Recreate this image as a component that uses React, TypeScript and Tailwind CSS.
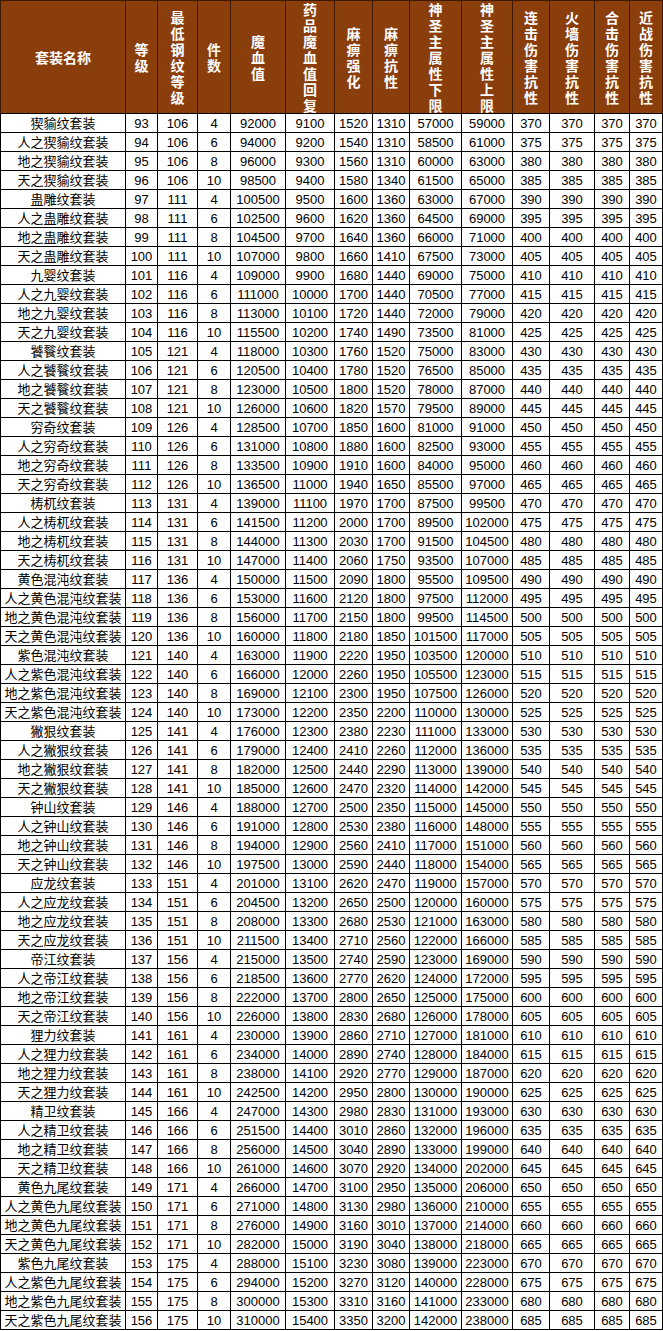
const columns = [
  "套装名称",
  "等级",
  "最低钢纹等级",
  "件数",
  "魔血值",
  "药品魔血值回复",
  "麻痹强化",
  "麻痹抗性",
  "神圣主属性下限",
  "神圣主属性上限",
  "连击伤害抗性",
  "火墙伤害抗性",
  "合击伤害抗性",
  "近战伤害抗性",
]

const groups = [
  { name: "猰貐", min: 106 },
  { name: "蛊雕", min: 111 },
  { name: "九婴", min: 116 },
  { name: "饕餮", min: 121 },
  { name: "穷奇", min: 126 },
  { name: "梼杌", min: 131 },
  { name: "黄色混沌", min: 136 },
  { name: "紫色混沌", min: 140 },
  { name: "獙狠", min: 141 },
  { name: "钟山", min: 146 },
  { name: "应龙", min: 151 },
  { name: "帝江", min: 156 },
  { name: "狸力", min: 161 },
  { name: "精卫", min: 166 },
  { name: "黄色九尾", min: 171 },
  { name: "紫色九尾", min: 175 },
]

// 魔血值, 药品回复, 麻痹强化, 麻痹抗性, 下限, 上限
const stats: number[][] = [
  [92000, 9100, 1520, 1310, 57000, 59000],
  [94000, 9200, 1540, 1310, 58500, 61000],
  [96000, 9300, 1560, 1310, 60000, 63000],
  [98500, 9400, 1580, 1340, 61500, 65000],
  [100500, 9500, 1600, 1360, 63000, 67000],
  [102500, 9600, 1620, 1360, 64500, 69000],
  [104500, 9700, 1640, 1360, 66000, 71000],
  [107000, 9800, 1660, 1410, 67500, 73000],
  [109000, 9900, 1680, 1440, 69000, 75000],
  [111000, 10000, 1700, 1440, 70500, 77000],
  [113000, 10100, 1720, 1440, 72000, 79000],
  [115500, 10200, 1740, 1490, 73500, 81000],
  [118000, 10300, 1760, 1520, 75000, 83000],
  [120500, 10400, 1780, 1520, 76500, 85000],
  [123000, 10500, 1800, 1520, 78000, 87000],
  [126000, 10600, 1820, 1570, 79500, 89000],
  [128500, 10700, 1850, 1600, 81000, 91000],
  [131000, 10800, 1880, 1600, 82500, 93000],
  [133500, 10900, 1910, 1600, 84000, 95000],
  [136500, 11000, 1940, 1650, 85500, 97000],
  [139000, 11100, 1970, 1700, 87500, 99500],
  [141500, 11200, 2000, 1700, 89500, 102000],
  [144000, 11300, 2030, 1700, 91500, 104500],
  [147000, 11400, 2060, 1750, 93500, 107000],
  [150000, 11500, 2090, 1800, 95500, 109500],
  [153000, 11600, 2120, 1800, 97500, 112000],
  [156000, 11700, 2150, 1800, 99500, 114500],
  [160000, 11800, 2180, 1850, 101500, 117000],
  [163000, 11900, 2220, 1950, 103500, 120000],
  [166000, 12000, 2260, 1950, 105500, 123000],
  [169000, 12100, 2300, 1950, 107500, 126000],
  [173000, 12200, 2350, 2200, 110000, 130000],
  [176000, 12300, 2380, 2230, 111000, 133000],
  [179000, 12400, 2410, 2260, 112000, 136000],
  [182000, 12500, 2440, 2290, 113000, 139000],
  [185000, 12600, 2470, 2320, 114000, 142000],
  [188000, 12700, 2500, 2350, 115000, 145000],
  [191000, 12800, 2530, 2380, 116000, 148000],
  [194000, 12900, 2560, 2410, 117000, 151000],
  [197500, 13000, 2590, 2440, 118000, 154000],
  [201000, 13100, 2620, 2470, 119000, 157000],
  [204500, 13200, 2650, 2500, 120000, 160000],
  [208000, 13300, 2680, 2530, 121000, 163000],
  [211500, 13400, 2710, 2560, 122000, 166000],
  [215000, 13500, 2740, 2590, 123000, 169000],
  [218500, 13600, 2770, 2620, 124000, 172000],
  [222000, 13700, 2800, 2650, 125000, 175000],
  [226000, 13800, 2830, 2680, 126000, 178000],
  [230000, 13900, 2860, 2710, 127000, 181000],
  [234000, 14000, 2890, 2740, 128000, 184000],
  [238000, 14100, 2920, 2770, 129000, 187000],
  [242500, 14200, 2950, 2800, 130000, 190000],
  [247000, 14300, 2980, 2830, 131000, 193000],
  [251500, 14400, 3010, 2860, 132000, 196000],
  [256000, 14500, 3040, 2890, 133000, 199000],
  [261000, 14600, 3070, 2920, 134000, 202000],
  [266000, 14700, 3100, 2950, 135000, 206000],
  [271000, 14800, 3130, 2980, 136000, 210000],
  [276000, 14900, 3160, 3010, 137000, 214000],
  [282000, 15000, 3190, 3040, 138000, 218000],
  [288000, 15100, 3230, 3080, 139000, 223000],
  [294000, 15200, 3270, 3120, 140000, 228000],
  [300000, 15300, 3310, 3160, 141000, 233000],
  [310000, 15400, 3350, 3200, 142000, 238000],
]

const prefixes = ["", "人之", "地之", "天之"]
const pieces = [4, 6, 8, 10]

const rows = stats.map((s, i) => {
  const g = groups[Math.floor(i / 4)]
  const resist = 370 + i * 5
  return [
    `${prefixes[i % 4]}${g.name}纹套装`,
    93 + i,
    g.min,
    pieces[i % 4],
    ...s,
    resist,
    resist,
    resist,
    resist,
  ]
})

const gridCols =
  "grid-cols-[124px_31px_39px_32px_54px_48px_37px_36px_51px_50px_36px_44px_34px_32px]"

export default function App() {
  return (
    <div
      className="w-[663px] bg-white"
      style={{ fontFamily: '"Liberation Sans", "Noto Sans CJK SC", sans-serif' }}
    >
      {/* header */}
      <div className={`grid ${gridCols} gap-x-px bg-[#3e1a05] pl-px pr-px pt-px`}>
        {columns.map((col, i) => (
          <div
            key={col}
            className="flex h-[112px] items-center justify-center bg-[#8a3e0c] text-[14px] font-bold leading-[16px] text-white"
            style={{ fontFamily: '"Noto Sans CJK SC", sans-serif' }}
          >
            {/* narrow columns: one character per line */}
            <span className={i === 0 ? "" : "block w-[14px] break-all text-center"}>{col}</span>
          </div>
        ))}
      </div>

      {/* body */}
      <div className={`grid ${gridCols} gap-px bg-black p-px`}>
        {rows.map((row, r) =>
          row.map((cell, c) => (
            <div
              key={`${r}-${c}`}
              className="h-[18px] bg-white text-center text-[13px] leading-[19px] text-black"
            >
              {cell}
            </div>
          ))
        )}
      </div>
    </div>
  )
}
